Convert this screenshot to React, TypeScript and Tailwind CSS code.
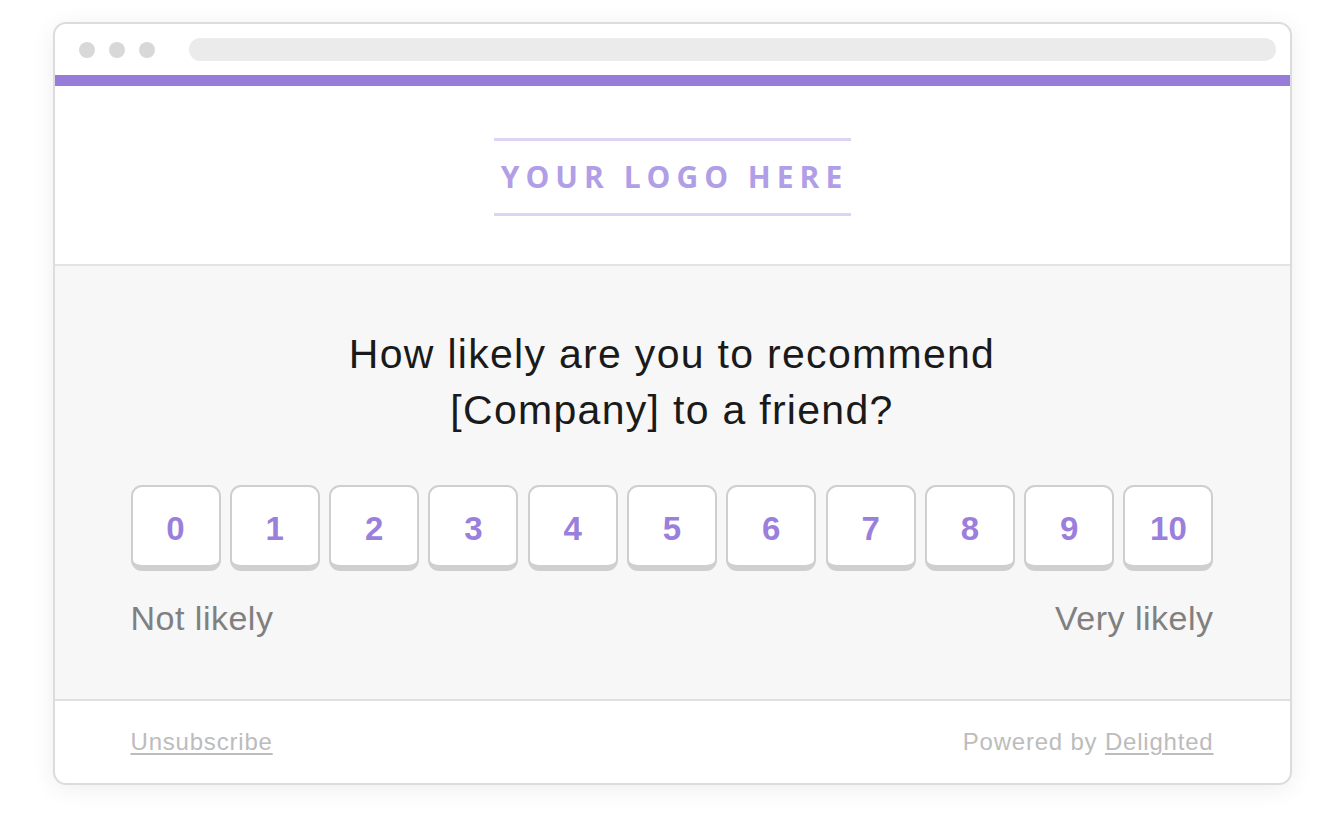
import { FC } from "react";

const scores = [0, 1, 2, 3, 4, 5, 6, 7, 8, 9, 10];

const ScoreButton: FC<{ value: number }> = ({ value }) => (
  <button className="flex h-[86px] w-[90px] items-center justify-center rounded-[11px] border-2 border-b-[6px] border-[#cfcfcf] bg-white pt-[6px] text-[33px] font-bold text-[#9a7fdc]">
    {value}
  </button>
);

const App: FC = () => {
  return (
    <div
      className="flex h-[824px] w-[1344px] justify-center bg-white pt-[22px]"
      style={{ fontFamily: '"Liberation Sans", Arial, sans-serif' }}
    >
      <div className="flex h-[763px] w-[1239px] flex-col overflow-hidden rounded-[13px] border-2 border-[#dcdcdc] bg-white shadow-[0_4px_24px_rgba(0,0,0,0.07)]">
        {/* browser chrome */}
        <div className="flex h-[51px] items-center gap-[14px] pl-[24px] pr-[14px]">
          <div className="flex gap-[14px]">
            <span className="h-[16px] w-[16px] rounded-full bg-[#d8d8d8]" />
            <span className="h-[16px] w-[16px] rounded-full bg-[#d8d8d8]" />
            <span className="h-[16px] w-[16px] rounded-full bg-[#d8d8d8]" />
          </div>
          <div className="ml-[20px] h-[23px] flex-1 rounded-full bg-[#ebebeb]" />
        </div>
        <div className="h-[11px] bg-[#977dd9]" />

        {/* logo header */}
        <div className="flex h-[180px] items-center justify-center border-b-2 border-[#e3e3e3] pt-[4px]">
          <div className="flex w-[357px] flex-col items-center border-y-[3px] border-[#ddd3f3] py-[22px]">
            <span
              className="pl-[5px] text-[30px] font-bold leading-[28px] tracking-[0.2em] text-[#b09ee6]"
              style={{ fontFamily: '"Open Sans", Lato, sans-serif' }}
            >
              YOUR LOGO HERE
            </span>
          </div>
        </div>

        {/* survey */}
        <div className="flex flex-1 flex-col bg-[#f7f7f7] px-[76px] pt-[60px]">
          <h1 className="text-center text-[41px] leading-[56px] tracking-[1.3px] text-[#1a1a1a]">
            How likely are you to recommend
            <br />
            [Company] to a friend?
          </h1>
          <div className="mt-[47px] flex justify-between">
            {scores.map((s) => (
              <ScoreButton key={s} value={s} />
            ))}
          </div>
          <div className="mt-[27px] flex justify-between text-[34px] leading-[40px] tracking-[0.5px] text-[#808080]">
            <span>Not likely</span>
            <span>Very likely</span>
          </div>
        </div>

        {/* footer */}
        <div className="flex h-[84px] items-center justify-between border-t-2 border-[#e0e0e0] px-[76px] text-[24px] tracking-[0.8px] text-[#bcbcbc]">
          <a className="underline underline-offset-[3px]">Unsubscribe</a>
          <span>
            Powered by <a className="underline underline-offset-[3px]">Delighted</a>
          </span>
        </div>
      </div>
    </div>
  );
};

export default App;
